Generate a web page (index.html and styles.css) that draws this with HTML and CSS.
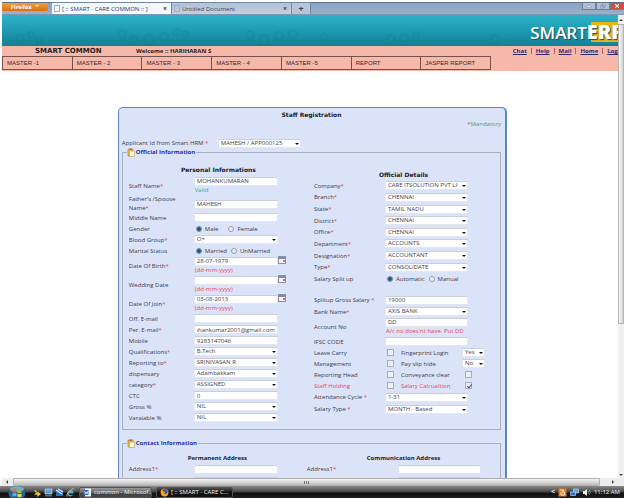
FILE: index.html
```html
<!DOCTYPE html>
<html lang="en">
<head>
<meta charset="utf-8">
<title>[ :: SMART - CARE COMMON :: ]</title>
<link rel="stylesheet" href="styles.css">
</head>
<body>
<div class="tabstrip">
  <button class="firefox" type="button">Firefox <span class="caret"></span></button>
  <div class="tab active"><span class="favicon"></span><span class="tab-title">[ :: SMART - CARE COMMON :: ]</span><span class="close">×</span></div>
  <div class="tab"><span class="favicon"></span><span class="tab-title">Untitled Document</span><span class="close">×</span></div>
  <button class="newtab" type="button" aria-label="New tab">+</button>
  <div class="winbuttons">
    <button type="button" aria-label="Minimize"><svg viewBox="0 0 14 8"><path d="M4 4h6v2H4z" fill="#fff" stroke="#56657c" stroke-width=".5"/></svg></button>
    <button type="button" aria-label="Restore"><svg viewBox="0 0 14 8"><path d="M6 1.500h4v3.500H6zM4 3h4v3.500H4z" fill="#dfe8f4" stroke="#56657c" stroke-width=".7"/></svg></button>
    <button type="button" class="shut" aria-label="Close window"><svg viewBox="0 0 14 8"><path d="M4.500 1.500l5 5m0-5l-5 5" stroke="#fff" stroke-width="1.500"/></svg></button>
  </div>
</div>

<div class="browser">
  <div class="page">
    <header class="banner">
      <svg class="bubbles" viewBox="0 0 616 31" preserveAspectRatio="none" fill="none" stroke="#0f6d80" stroke-width="2" opacity=".14">
        <circle cx="18" cy="24" r="4"/><circle cx="29" cy="20" r="3"/><circle cx="37" cy="25" r="3"/><circle cx="120" cy="19" r="4"/><circle cx="132" cy="24" r="3"/><circle cx="147" cy="25" r="5"/><circle cx="162" cy="22" r="4"/><circle cx="174" cy="17" r="3"/><circle cx="183" cy="19" r="3"/><circle cx="248" cy="20" r="4"/><circle cx="262" cy="25" r="5"/><circle cx="277" cy="21" r="4"/><circle cx="291" cy="19" r="4"/><circle cx="322" cy="22" r="3"/><circle cx="389" cy="24" r="4"/><circle cx="402" cy="23" r="4"/><circle cx="414" cy="20" r="3"/><circle cx="493" cy="24" r="4"/>
      </svg>
      <div class="logo"><span>SMART</span><b>ERP</b></div>
    </header>
    <div class="bar">
      <div class="who">
        <strong class="module">SMART COMMON</strong>
        <strong class="welcome">Welcome :: HARIHARAN S</strong>
        <div class="links"><a href="#">Chat</a><i></i><a href="#">Help</a><i></i><a href="#">Mail</a><i></i><a href="#">Home</a><i></i><a href="#">Logout</a></div>
      </div>
      <nav class="menu"><a href="#">MASTER -1</a><a href="#">MASTER - 2</a><a href="#">MASTER - 3</a><a href="#">MASTER - 4</a><a href="#">MASTER -5</a><a href="#">REPORT</a><a href="#">JASPER REPORT</a></nav>
    </div>

    <form class="panel">
      <h1>Staff Registration</h1>
      <p class="mandatory"><em>*</em>Mandatory</p>
      <div class="applicant"><label for="app">Applicant Id from Smart HRM <em>*</em></label><span class="select"><select id="app"><option>MAHESH / APP000125</option></select></span></div>

      <fieldset>
        <legend><svg viewBox="0 0 8 9"><path d="M1 1h5v7H1z" fill="#f3b73c" stroke="#b07a2a" stroke-width=".6"/><path d="M2.500 3h5v5.500h-5z" fill="#fffbe0" stroke="#bba04d" stroke-width=".6"/><path d="M2.500 .5h2.500v1.500H2.500z" fill="#d5654b"/></svg>Official Information</legend>
        <div class="columns">
          <section class="personal">
            <h2>Personal Informations</h2>
            <div class="row tall"><label for="staff">Staff Name<em>*</em></label><div class="stack"><input id="staff" type="text" value="MOHANKUMARAN"><small class="ok">Valid</small></div></div>
            <div class="row double"><label for="father">Father's /Spouse Name<em>*</em></label><input id="father" type="text" value="MAHESH"></div>
            <div class="row"><label for="middle">Middle Name</label><input id="middle" type="text"></div>
            <div class="row"><span>Gender</span><div class="radios wide"><label><input type="radio" name="gender" checked>Male</label><label><input type="radio" name="gender">Female</label></div></div>
            <div class="row"><label for="blood">Blood Group<em>*</em></label><span class="select"><select id="blood"><option>O+</option></select></span></div>
            <div class="row"><span>Marital Status</span><div class="radios"><label><input type="radio" name="marital" checked>Married</label><label><input type="radio" name="marital">UnMarried</label></div></div>
            <div class="row tall"><label for="dob">Date Of Birth<em>*</em></label><div class="stack"><input id="dob" type="text" value="28-07-1979"><small>(dd-mm-yyyy)</small></div><button class="cal" type="button" aria-label="Pick date of birth"></button></div>
            <div class="row tall"><label for="wed">Wedding Date</label><div class="stack"><input id="wed" type="text"><small>(dd-mm-yyyy)</small></div><button class="cal" type="button" aria-label="Pick wedding date"></button></div>
            <div class="row tall"><label for="doj">Date Of Join<em>*</em></label><div class="stack"><input id="doj" type="text" value="03-08-2013"><small>(dd-mm-yyyy)</small></div><button class="cal" type="button" aria-label="Pick date of join"></button></div>
            <div class="row"><label for="off">Off. E-mail</label><input id="off" type="text"></div>
            <div class="row"><label for="per">Per. E-mail<em>*</em></label><input id="per" class="tail" type="text" value="mohankumar2001@gmail.com"></div>
            <div class="row"><label for="mob">Mobile</label><input id="mob" type="text" value="9283147046"></div>
            <div class="row"><label for="qual">Qualifications<em>*</em></label><span class="select"><select id="qual"><option>B.Tech</option></select></span></div>
            <div class="row"><label for="rep">Reporting to<em>*</em></label><span class="select"><select id="rep"><option>SRINIVASAN R</option></select></span></div>
            <div class="row"><label for="disp">dispensary</label><span class="select"><select id="disp"><option>Adambakkam</option></select></span></div>
            <div class="row"><label for="cat">category<em>*</em></label><span class="select"><select id="cat"><option>ASSIGNED</option></select></span></div>
            <div class="row"><label for="ctc">CTC</label><input id="ctc" type="text" value="0"></div>
            <div class="row"><label for="gross">Gross %</label><span class="select"><select id="gross"><option>NIL</option></select></span></div>
            <div class="row"><label for="vari">Varaiable %</label><span class="select"><select id="vari"><option>NIL</option></select></span></div>
          </section>

          <section class="details">
            <h2>Official Details</h2>
            <div class="posting">
              <div class="row"><label for="comp">Company<em>*</em></label><span class="select"><select id="comp"><option>CARE ITSOLUTION PVT LIMITED</option></select></span></div>
              <div class="row"><label for="branch">Branch<em>*</em></label><span class="select"><select id="branch"><option>CHENNAI</option></select></span></div>
              <div class="row"><label for="state">State<em>*</em></label><span class="select"><select id="state"><option>TAMIL NADU</option></select></span></div>
              <div class="row"><label for="dist">District<em>*</em></label><span class="select"><select id="dist"><option>CHENNAI</option></select></span></div>
              <div class="row"><label for="office">Office<em>*</em></label><span class="select"><select id="office"><option>CHENNAI</option></select></span></div>
              <div class="row"><label for="dept">Department<em>*</em></label><span class="select"><select id="dept"><option>ACCOUNTS</option></select></span></div>
              <div class="row"><label for="desig">Designation<em>*</em></label><span class="select"><select id="desig"><option>ACCOUNTANT</option></select></span></div>
              <div class="row"><label for="type">Type<em>*</em></label><span class="select"><select id="type"><option>CONSOLIDATE</option></select></span></div>
            </div>
            <div class="row split"><span>Salary Split up</span><div class="radios"><label><input type="radio" name="split" checked>Automatic</label><label><input type="radio" name="split">Manual</label></div></div>
            <div class="row roomy"><label for="sal">Splitup Gross Salary <em>*</em></label><input id="sal" type="text" value="19000"></div>
            <div class="row"><label for="bank">Bank Name<em>*</em></label><span class="select"><select id="bank"><option>AXIS BANK</option></select></span></div>
            <div class="row tall"><label for="acc">Account No</label><div class="stack"><input id="acc" type="text" value="DD"><small>A/c no does'nt have. Put DD</small></div></div>
            <div class="row"><label for="ifsc">IFSC CODE</label><input id="ifsc" type="text"></div>
            <div class="row flags"><label for="leave">Leave Carry</label><input id="leave" type="checkbox"><label for="finger">Fingerprint Login</label><span class="select small"><select id="finger"><option>Yes</option></select></span></div>
            <div class="row flags"><label for="mgmt">Management</label><input id="mgmt" type="checkbox"><label for="slip">Pay slip hide</label><span class="select small"><select id="slip"><option>No</option></select></span></div>
            <div class="row flags"><label for="head">Reporting Head</label><input id="head" type="checkbox"><label for="conv">Conveyance clear</label><input id="conv" class="second" type="checkbox"></div>
            <div class="row flags alert"><label for="hold">Staff Holding</label><input id="hold" type="checkbox"><label for="calc">Salary Calcualtion</label><input id="calc" class="second" type="checkbox" checked></div>
            <div class="row roomy"><label for="att">Attendance Cycle <em>*</em></label><span class="select"><select id="att"><option>1-31</option></select></span></div>
            <div class="row roomy"><label for="stype">Salary Type <em>*</em></label><span class="select"><select id="stype"><option>MONTH - Based</option></select></span></div>
          </section>
        </div>
      </fieldset>

      <fieldset>
        <legend><svg viewBox="0 0 8 9"><path d="M1 1h5v7H1z" fill="#f3b73c" stroke="#b07a2a" stroke-width=".6"/><path d="M2.500 3h5v5.500h-5z" fill="#fffbe0" stroke="#bba04d" stroke-width=".6"/><path d="M2.500 .5h2.500v1.500H2.500z" fill="#d5654b"/></svg>Contact Information</legend>
        <div class="columns contact">
          <section>
            <h3>Permanent Address</h3>
            <div class="row roomy"><label for="pa1">Address1<em>*</em></label><input id="pa1" type="text"></div>
            <div class="row roomy"><span></span><input type="text" aria-labelledby="pa1"></div>
          </section>
          <section class="comm">
            <h3>Communication Address</h3>
            <div class="row roomy"><label for="ca1">Address1<em>*</em></label><input id="ca1" type="text"></div>
            <div class="row roomy"><span></span><input type="text" aria-labelledby="ca1"></div>
          </section>
        </div>
      </fieldset>
    </form>
  </div>
  <div class="vscroll"><span class="up"></span><span class="thumb"></span><span class="down"></span></div>
</div>

<div class="hscroll"><span class="left"></span><span class="thumb"></span><span class="right"></span></div>

<footer class="taskbar">
  <button class="start" type="button" aria-label="Start"><svg viewBox="0 0 18 12"><ellipse cx="9" cy="7" rx="8.500" ry="7.500" fill="#246591"/><ellipse cx="9" cy="3" rx="7" ry="3" fill="#79a7bd"/><path d="M4.500 3.500q2-1.500 4 0v3q-2-1.200-4 0z" fill="#ef6438"/><path d="M9.500 3.500q2 1.300 4 0v3q-2 1.300-4 0z" fill="#8dc63f"/><path d="M4.500 7.500q2-1.300 4 0v3q-2-1.200-4 0z" fill="#4fb0ea"/><path d="M9.500 7.500q2 1.300 4 0v3q-2 1.300-4 0z" fill="#fbd04b"/></svg></button>
  <div class="quick">
    <svg viewBox="0 0 9 9"><path d="M1 2l3 1-1 2 2-1 3 2-4 3 .5-2.500L1 7l2-2z" fill="#f0d32f"/></svg>
    <svg viewBox="0 0 9 9"><path d="M1 1h7v5H1z" fill="#5c9fe0" stroke="#c6dcf2" stroke-width=".7"/><path d="M1 7h7v1.500H1z" fill="#3672b8"/></svg>
    <svg viewBox="0 0 9 9"><path d="M1 1h7v7H1z" fill="#2e70b7"/><path d="M1 2l6 4M3 1l5 3" stroke="#dbeaf7" stroke-width="1.200"/></svg>
    <svg viewBox="0 0 9 9"><path d="M7.500 5.500H2.500Q3 8 7.300 6.800 5 9.500 2.200 7.800.5 6 2 3.500 4 1 6.500 2.500 7.700 3.500 7.500 5.500z" fill="#48aeea"/><path d="M1 8.500Q0 5 6 1q2-.8 2.300.5" fill="none" stroke="#f0c642" stroke-width=".9"/></svg>
  </div>
  <button class="task" type="button"><svg viewBox="0 0 9 9"><path d="M2 .5h6v8H2z" fill="#eaf2fc"/><path d="M.5 2h5v5h-5z" fill="#3468b4"/><path d="M1.500 3l1 3 .8-2 .8 2 .8-3" fill="none" stroke="#fff" stroke-width=".7"/></svg>common - Microsof...</button>
  <button class="task current" type="button"><svg viewBox="0 0 9 9"><circle cx="4.500" cy="4.500" r="4" fill="#e66a17"/><circle cx="5" cy="3.800" r="2.500" fill="#295fa6"/><path d="M1 2q2 0 2.500 1.500L5 4Q3.500 6 5.500 6 7.500 6 8 3q1 4-2.500 5.500Q.5 8 1 2z" fill="#f9a12b"/></svg>[ :: SMART - CARE C...</button>
  <div class="tray">
    <span class="chevron">&lt;</span>
    <svg viewBox="0 0 9 9"><path d="M.5.5h8v8h-8z" fill="#ef7417"/><path d="M2 2h4L4 4h2.500v3H3V4" fill="none" stroke="#ffe6c9" stroke-width="1"/></svg>
    <svg viewBox="0 0 9 9"><path d="M3.500 1h5v4h-5z" fill="#4fa2e6" stroke="#d6e8f8" stroke-width=".6"/><path d="M.5 4h5v3.500h-5z" fill="#2c74c4" stroke="#d6e8f8" stroke-width=".6"/></svg>
    <svg viewBox="0 0 9 9"><path d="M1 3h1.500L5 1v7L2.500 6H1z" fill="#eee"/><path d="M6 3q1.200 1.500 0 3M7.300 2q2 2.500 0 5" fill="none" stroke="#70c46b" stroke-width=".7"/></svg>
    <time>11:12 AM</time>
  </div>
</footer>
</body>
</html>
```
FILE: styles.css
```css
* { box-sizing: border-box; }

body {
  margin: 0;
  padding: 2px 0 0 2px;
  height: 100vh;
  display: flex;
  flex-direction: column;
  overflow: hidden;
  background: #fff;
  color: #3c3c4a;
  font: 6px/10px "Open Sans", "Noto Sans", sans-serif;
}

button, input, select { font: inherit; color: inherit; border: 0; padding: 0; margin: 0; border-radius: 0; }
h1, h2, h3, p { margin: 0; }
em { color: #f0414d; font-style: normal; }
svg { display: block; }

/* browser tabs */
.tabstrip {
  display: flex;
  align-items: flex-end;
  height: 13px;
  flex: none;
  background: linear-gradient(#89a2c3, #9ab0cb);
  border-top: 1px solid #5f7289;
  border-bottom: 1px solid #7b98b5;
}
.firefox {
  align-self: flex-start;
  width: 46px;
  height: 8px;
  margin-right: 4px;
  border-radius: 0 0 2px 2px;
  background: linear-gradient(#f0a03c, #dc6f0f);
  color: #fff;
  font: bold 6px/7px "Open Sans", sans-serif;
}
.caret { display: inline-block; border: 2px solid transparent; border-top-color: #fff; border-bottom: 0; margin: 0 0 2px 2px; }
.tab {
  display: flex;
  align-items: center;
  width: 120px;
  height: 12px;
  padding: 0 4px 0 2px;
  background: linear-gradient(#b3c1d5, #c5cfdd);
  border: 1px solid #7288a4;
  border-bottom: 0;
  border-left-width: 0;
  color: #3a4358;
}
.tab.active { background: #f3f8fd; color: #3f3558; }
.favicon { width: 6px; height: 7px; border: 1px solid #a3b0c0; margin-right: 2px; flex: none; }
.tab-title { flex: 1; white-space: nowrap; }
.close { font-weight: bold; font-size: 7px; }
.newtab { width: 19px; height: 12px; background: #b8c5d8; border: 1px solid #7288a4; border-width: 1px 1px 0 0; font: bold 9px/9px "Open Sans", sans-serif; color: #33425a; }
.winbuttons { display: flex; align-self: flex-start; margin-left: auto; }
.winbuttons button { width: 14px; height: 7px; background: #aebfd4; border: 1px solid #6c7f99; border-top: 0; }
.winbuttons .shut { background: #cf4b3d; }
.winbuttons svg { width: 100%; height: 6px; }

/* page */
.browser { display: flex; flex: 1; min-height: 0; }
.page { flex: 1; min-width: 0; overflow: hidden; }
.banner {
  position: relative;
  display: flex;
  justify-content: flex-end;
  height: 31px;
  overflow: hidden;
  background: linear-gradient(#2bb2c6, #1f9bb1 50%, #157f95);
}
.bubbles { position: absolute; inset: 0; width: 100%; height: 100%; }
.logo {
  position: relative;
  display: flex;
  height: 20px;
  margin: 7px -6px 0 0;
  color: #fff;
  font: 600 17px/22px "Open Sans", sans-serif;
  text-shadow: 1px 1px 1px #15505c;
}
.logo b { font-size: 20px; line-height: 20px; background: linear-gradient(90deg, transparent 4px, #e8b413 4px); }
.bar { height: 25px; padding-top: 1px; background: #f5b8a9; }
.who { display: flex; height: 9px; line-height: 9px; white-space: nowrap; color: #2a1d20; }
.module { margin-left: 33px; width: 101px; font: bold 7px/9px "DejaVu Sans", sans-serif; }
.links { display: flex; gap: 4px; margin: 0 -10px 0 auto; font-weight: bold; }
.links a { color: #302a72; }
.links i { width: 1px; height: 6px; margin-top: 1px; background: #b75b6c; }
.links { column-gap: 4px; }
.menu { display: grid; grid-template-columns: repeat(7, 1fr); width: 79.4%; height: 14px; border: 1px solid #75524d; border-right: 0; }
.menu a { padding-left: 4px; border-right: 1px solid #75524d; color: #37272a; font: 6px/12px "Liberation Sans", sans-serif; text-decoration: none; }

/* registration form */
.panel {
  width: 63.2%;
  min-width: 380px;
  margin: 36px 0 0 18.8%;
  padding: 2px 4px 20px 3px;
  background: #dae3f8;
  border: 1px solid #5d86bd;
  border-right-width: 2px;
  border-radius: 5px;
}
h1, h2 { color: #20202c; font: bold 6px/10px "DejaVu Sans", sans-serif; text-align: center; }
.mandatory { color: #3aa57c; text-align: right; line-height: 8px; }
.applicant { display: flex; align-items: center; height: 10px; margin-top: 10px; }
.applicant label { width: 96px; white-space: nowrap; }
.applicant .select { width: 83px; }

fieldset { min-width: 0; margin: 0 0 9px; padding: 0 1px 6px 6px; border: 1px solid #a9b0c2; }
legend { display: flex; align-items: center; gap: 1px; height: 9px; margin-left: -2px; padding: 0 1px 0 0; color: #2c2fa5; font: bold 6px/9px "Open Sans", sans-serif; }
legend svg { width: 8px; height: 9px; }
.columns { display: grid; grid-template-columns: 1fr 1fr; }
.personal { --label: 65px; --field: 84px; }
.details { --label: 71px; --field: 83px; }
.personal h2 { padding: 8px 6px 1px 0; }
.details h2 { padding: 13px 6px 0 0; }

.row { display: grid; grid-template-columns: var(--label) var(--field) auto; justify-content: start; align-items: center; height: 11px; }
.row.roomy { height: 12px; }
.row.tall { height: 19px; }
.row.double { height: 17px; line-height: 9px; }
.posting { display: grid; grid-auto-rows: 1fr; height: 93px; }
.posting .row { height: auto; }
.split { margin-bottom: 10px; }
.row > label, .row > span:first-child { white-space: nowrap; }
.row.double > label { white-space: normal; width: 56px; }

input[type="text"], select { display: block; width: 100%; height: 9px; padding: 0 2px; background: #fff; border: 1px solid #e3e6ef; border-top-color: #c9cedb; line-height: 7px; }
.tail { direction: rtl; }
.select { position: relative; display: block; }
select { appearance: none; padding-right: 9px; text-overflow: clip; }
.select::after { content: ""; position: absolute; right: 2px; top: 4px; border: 2px solid transparent; border-top-color: #111; border-bottom: 0; pointer-events: none; }
.stack { display: flex; flex-direction: column; height: 18px; }
.stack input { flex: none; }
small { color: #ee4350; font-size: 6px; line-height: 8px; padding-left: 1px; white-space: nowrap; }
small.ok { color: #35aa7f; }
.cal { align-self: start; width: 8px; height: 8px; background: linear-gradient(#d96c5e, #d96c5e) 4px 3px / 2px 2px no-repeat, linear-gradient(#7f89b0 2px, #f4f2ee 2px); border: 1px solid #8a90a4; }

.radios { display: flex; gap: 4px; padding-left: 2px; white-space: nowrap; }
.radios.wide { gap: 10px; }
.radios label { display: flex; align-items: center; gap: 3px; }
input[type="radio"] { appearance: none; width: 6px; height: 6px; border: 1px solid #949bab; border-radius: 50%; background: #eff1f5; }
input[type="radio"]:checked { background: radial-gradient(#1b4b72 1px, #8fb5cf 3px); border-color: #6c8298; }
.flags { grid-template-columns: 71px 16px 61px 23px; }
input[type="checkbox"] { appearance: none; position: relative; width: 7px; height: 7px; margin-left: 2px; border: 1px solid #a8aebb; background: #eceef2; }
.flags .second { margin-left: 3px; }
input[type="checkbox"]:checked::after { content: ""; position: absolute; left: 2px; top: 0; width: 2px; height: 4px; border: solid #37558c; border-width: 0 1px 1px 0; transform: rotate(40deg); }
.alert { color: #f0414d; }

.contact { grid-template-columns: 178px 1fr; --label: 65px; --field: 84px; }
.comm { --label: 91px; --field: 83px; }
h3 { padding-top: 5px; color: #20202c; font: bold 6px/10px "Open Sans", sans-serif; padding-left: 59px; }
.comm h3 { padding-left: 60px; }

/* scrollbars */
.vscroll { display: flex; flex-direction: column; align-items: center; justify-content: space-between; width: 6px; background: #f0f0f0; }
.up, .down { border: 2px solid transparent; }
.up { border-bottom-color: #444; margin-top: 2px; }
.down { border-top-color: #444; }
.vscroll .thumb { flex: 1; width: 6px; margin: 3px 0 150px; border: 1px solid #b5b5b5; background: linear-gradient(90deg, #f8f8f8, #d3d3d3); }
.hscroll { display: flex; align-items: center; height: 8px; flex: none; background: #ececec; }
.left, .right { border: 2px solid transparent; }
.left { border-right-color: #444; margin: 0 5px 0 2px; }
.right { border-left-color: #444; margin: 0 8px 0 12px; }
.hscroll .thumb { flex: 1; height: 8px; border: 1px solid #b0b0b0; border-radius: 1px; background: repeating-linear-gradient(90deg, #777 0 1px, transparent 1px 2px) center / 5px 3px no-repeat, linear-gradient(#f5f5f5, #bcbcbc); }

/* taskbar */
.taskbar { display: flex; align-items: center; height: 12px; flex: none; margin-left: -2px; background: linear-gradient(#8b8b8b, #4c4c4c 45%, #111 60%, #1d1d1d); color: #f2f2f2; }
.start { width: 18px; height: 12px; margin: 0 7px 0 8px; background: none; }
.start svg { width: 18px; height: 12px; }
.quick { display: flex; gap: 2px; margin-right: 4px; }
.quick svg, .task svg, .tray svg { width: 9px; height: 9px; flex: none; }
.task { display: flex; align-items: center; gap: 2px; width: 73px; height: 11px; margin-right: 4px; padding-left: 3px; border: 1px solid #555; border-radius: 2px; background: linear-gradient(#999, #666 50%, #454545 51%); white-space: nowrap; overflow: hidden; }
.task.current { width: 77px; background: linear-gradient(#4c4c4c, #111 50%); }
.tray { display: flex; align-items: center; gap: 3px; margin-left: auto; padding-right: 4px; white-space: nowrap; }
.chevron { font-size: 7px; font-weight: bold; }
```
